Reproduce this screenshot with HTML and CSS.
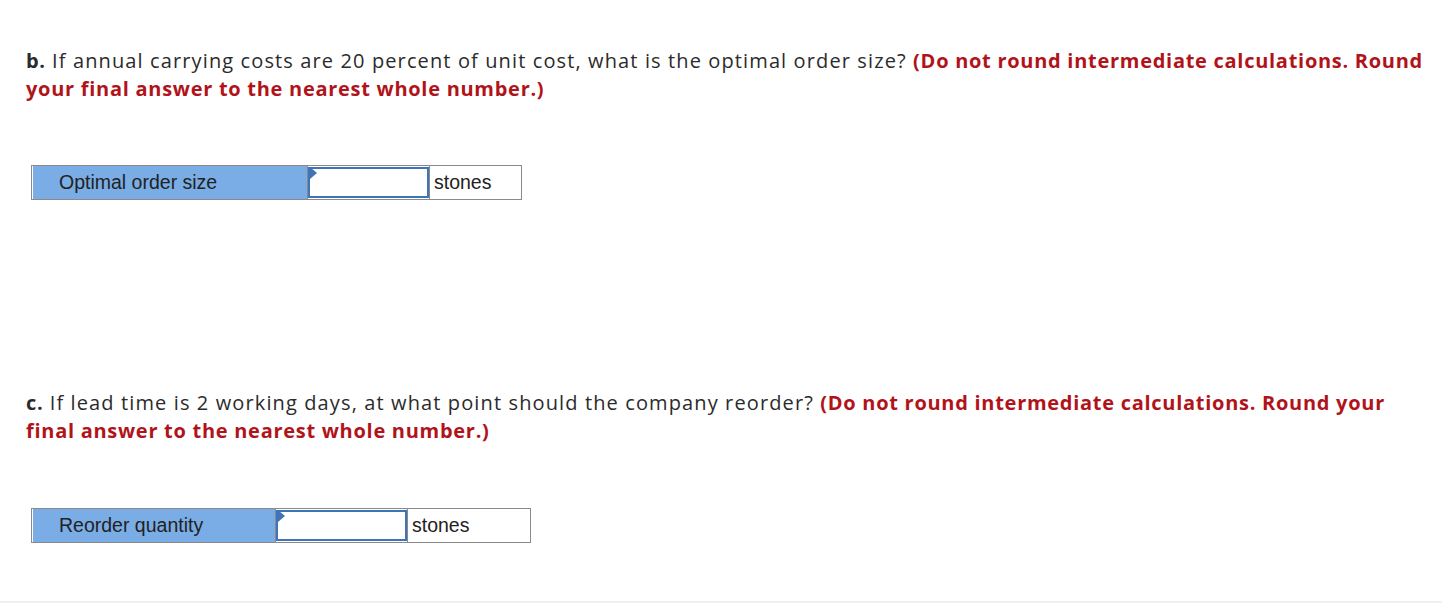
FILE: index.html
```html
<!DOCTYPE html>
<html>
<head>
<meta charset="utf-8">
<link rel="stylesheet" href="styles.css">
</head>
<body>
<div class="page">
  <section class="question q-b">
    <p class="prompt"><b>b.</b> If annual carrying costs are 20 percent of unit cost, what is the optimal order size? <strong class="note">(Do not round intermediate calculations. Round your final answer to the nearest whole number.)</strong></p>
    <table class="answer answer-b">
      <tr>
        <td class="label">Optimal order size</td>
        <td class="input"><span class="field"><span class="flag"></span></span></td>
        <td class="unit">stones</td>
      </tr>
    </table>
  </section>
  <section class="question q-c">
    <p class="prompt"><b>c.</b> If lead time is 2 working days, at what point should the company reorder? <strong class="note">(Do not round intermediate calculations. Round your final answer to the nearest whole number.)</strong></p>
    <table class="answer answer-c">
      <tr>
        <td class="label">Reorder quantity</td>
        <td class="input"><span class="field"><span class="flag"></span></span></td>
        <td class="unit">stones</td>
      </tr>
    </table>
  </section>
  <div class="bottom-rule"></div>
</div>
</body>
</html>
```
FILE: styles.css
```css
html, body {
  margin: 0;
  padding: 0;
  background: #fff;
}
.page {
  width: 1442px;
  height: 608px;
  position: relative;
  overflow: hidden;
}
.question {
  padding-left: 26px;
}
.q-b {
  padding-top: 47px;
}
.q-c {
  padding-top: 189px;
}
.prompt {
  margin: 0;
  font-family: "Open Sans", sans-serif;
  font-size: 20px;
  line-height: 28px;
  color: #2b2b2b;
  width: 1410px;
  letter-spacing: 1.12px;
}
.prompt b {
  font-weight: 700;
  letter-spacing: 0.7px;
}
.note {
  color: #b0141a;
  font-weight: 700;
  letter-spacing: 0.72px;
}
.answer {
  border-collapse: collapse;
  border: 1px solid #8a8a8a;
  margin-left: 5px;
  font-family: "Liberation Sans", Arial, sans-serif;
  font-size: 19.5px;
  color: #222;
}
.answer-b { margin-top: 62px; }
.answer-c { margin-top: 63px; }
.answer td {
  height: 33px;
  padding: 0;
  vertical-align: middle;
}
.label {
  background: #7aade6;
  border: 1px solid #8a8a8a;
  padding-left: 27px !important;
  box-shadow: inset 1px 0 0 #fff;
}
.answer-b .label { width: 248px; }
.answer-c .label { width: 216px; }
.input {
  border: 1px solid #8a8a8a;
  background: #fff;
}
.answer-b .input { width: 121px; }
.answer-c .input { width: 131px; }
.field {
  display: block;
  position: relative;
  height: 31px;
  border: 2px solid #3f74b8;
  box-sizing: border-box;
  margin: 1px 0;
}
.flag {
  position: absolute;
  left: 0;
  top: -2px;
  width: 0;
  height: 0;
  border-top: 6px solid transparent;
  border-bottom: 6px solid transparent;
  border-left: 7px solid #3f74b8;
}
.unit {
  border: 1px solid #8a8a8a;
  padding-left: 4px !important;
}
.answer-b .unit { width: 87px; }
.answer-c .unit { width: 118px; }
.bottom-rule {
  position: absolute;
  left: 0;
  right: 0;
  top: 601px;
  height: 2px;
  background: #f0f0f0;
}
```
